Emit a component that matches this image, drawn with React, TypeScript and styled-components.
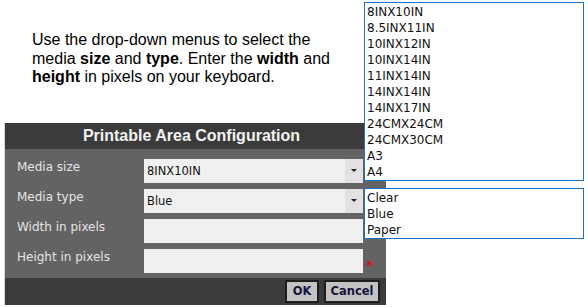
import styled, { createGlobalStyle } from "styled-components";

const GlobalStyle = createGlobalStyle`
  html, body {
    margin: 0;
    padding: 0;
    background: #ffffff;
  }
  body {
    width: 588px;
    height: 307px;
    overflow: hidden;
    position: relative;
    font-family: "Liberation Sans", Arial, sans-serif;
  }
`;

const Page = styled.div`
  display: flex;
  flex-direction: column;
  padding-top: 31px;
`;

const Intro = styled.p`
  margin: 0 0 0 32px;
  width: 305px;
  font-size: 16px;
  line-height: 18.5px;
  color: #000;
`;

const Dialog = styled.div`
  margin: 36px 0 0 4px;
  width: 382px;
  display: flex;
  flex-direction: column;
  border-left: 1px solid #d8d8d8;
  box-sizing: border-box;
`;

const TitleBar = styled.div`
  height: 26px;
  background: #3b3b3b;
  color: #f2f2f2;
  font-weight: bold;
  font-size: 16px;
  display: flex;
  align-items: center;
  justify-content: center;
  padding-right: 8px;
`;

const Body = styled.div`
  background: #636363;
  padding: 10px 0 5px 12px;
  display: flex;
  flex-direction: column;
  gap: 6px;
`;

const Row = styled.div`
  display: flex;
  align-items: center;
  height: 24px;
`;

const Label = styled.div`
  width: 127px;
  font-family: "DejaVu Sans", Tahoma, sans-serif;
  font-size: 12px;
  color: #e4e4e4;
  margin-top: -7px;
`;

const Field = styled.div`
  width: 219px;
  height: 24px;
  box-sizing: border-box;
  background: #f0f0f0;
  display: flex;
  align-items: center;
  font-family: "DejaVu Sans", Tahoma, sans-serif;
  font-size: 11.5px;
  color: #111;
  padding-left: 3px;
`;

const FieldValue = styled.span`
  flex: 1;
`;

const Arrow = styled.div`
  width: 18px;
  height: 100%;
  background: #e2e2e2;
  display: flex;
  align-items: center;
  justify-content: center;
  &::after {
    content: "";
    border-left: 3px solid transparent;
    border-right: 3px solid transparent;
    border-top: 3px solid #222;
  }
`;

const Required = styled.span`
  color: #d01414;
  font-family: "DejaVu Sans", sans-serif;
  font-weight: bold;
  font-size: 14px;
  margin-left: 3px;
  margin-top: 8px;
`;

const Footer = styled.div`
  height: 27px;
  background: #3b3b3b;
  display: flex;
  align-items: center;
  justify-content: flex-end;
  gap: 5px;
  padding-right: 6px;
`;

const Button = styled.button<{ $w: number }>`
  width: ${(p) => p.$w}px;
  height: 23px;
  background: #c3c3c3;
  border: 2px solid #1e1e1e;
  box-sizing: border-box;
  font-family: "DejaVu Sans", Tahoma, sans-serif;
  font-weight: bold;
  font-size: 11.5px;
  color: #14143a;
  padding: 0;
`;

const ListBox = styled.div<{ $top: number }>`
  position: absolute;
  left: 364px;
  top: ${(p) => p.$top}px;
  width: 220px;
  box-sizing: border-box;
  border: 1px solid #1a73c9;
  background: #fff;
  padding: 1px 0 0 2px;
`;

const Option = styled.div`
  height: 16px;
  line-height: 16px;
  font-family: "DejaVu Sans", Tahoma, sans-serif;
  font-size: 12px;
  color: #111;
`;

const sizes = [
  "8INX10IN",
  "8.5INX11IN",
  "10INX12IN",
  "10INX14IN",
  "11INX14IN",
  "14INX14IN",
  "14INX17IN",
  "24CMX24CM",
  "24CMX30CM",
  "A3",
  "A4",
];

const types = ["Clear", "Blue", "Paper"];

export default function App() {
  return (
    <>
      <GlobalStyle />
      <Page>
        <Intro>
          Use the drop-down menus to select the media <b>size</b> and{" "}
          <b>type</b>. Enter the <b>width</b> and <b>height</b> in pixels on
          your keyboard.
        </Intro>
        <Dialog>
          <TitleBar>Printable Area Configuration</TitleBar>
          <Body>
            <Row>
              <Label>Media size</Label>
              <Field>
                <FieldValue>8INX10IN</FieldValue>
                <Arrow />
              </Field>
            </Row>
            <Row>
              <Label>Media type</Label>
              <Field>
                <FieldValue>Blue</FieldValue>
                <Arrow />
              </Field>
            </Row>
            <Row>
              <Label>Width in pixels</Label>
              <Field />
            </Row>
            <Row>
              <Label>Height in pixels</Label>
              <Field />
              <Required>*</Required>
            </Row>
          </Body>
          <Footer>
            <Button $w={34}>OK</Button>
            <Button $w={56}>Cancel</Button>
          </Footer>
        </Dialog>
      </Page>
      <ListBox $top={2}>
        {sizes.map((s) => (
          <Option key={s}>{s}</Option>
        ))}
      </ListBox>
      <ListBox $top={188}>
        {types.map((t) => (
          <Option key={t}>{t}</Option>
        ))}
      </ListBox>
    </>
  );
}
